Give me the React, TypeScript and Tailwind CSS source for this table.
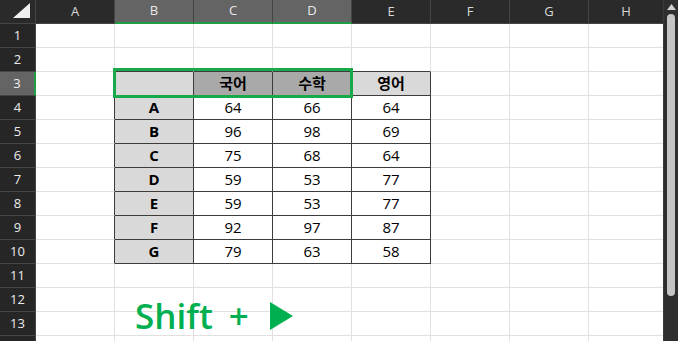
import React from 'react';

const cols = ['A', 'B', 'C', 'D', 'E', 'F', 'G', 'H'];
const colWidths = ['w-[79px]', 'w-[79px]', 'w-[79px]', 'w-[79px]', 'w-[79px]', 'w-[79px]', 'w-[79px]', 'w-[75px]'];

const data: Record<number, string[]> = {
    3: ['', '국어', '수학', '영어'],
    4: ['A', '64', '66', '64'],
    5: ['B', '96', '98', '69'],
    6: ['C', '75', '68', '64'],
    7: ['D', '59', '53', '77'],
    8: ['E', '59', '53', '77'],
    9: ['F', '92', '97', '87'],
    10: ['G', '79', '63', '58'],
};

const inTable = (r: number, c: number) => r >= 3 && r <= 10 && c >= 1 && c <= 4;

const Cell = ({ r, c }: { r: number; c: number }) => {
    const t = inTable(r, c);
    const darkRight = t || (c === 0 && r >= 3 && r <= 10);
    const darkBottom = t || (r === 2 && c >= 1 && c <= 4);
    let bg = 'bg-white';
    if (t && (c === 1 || (r === 3 && c === 4))) bg = 'bg-[#d9d9d9]';
    if (r === 3 && (c === 2 || c === 3)) bg = 'bg-[#a9a9a9]';
    const bold = t && (c === 1 || r === 3);
    const text = t ? data[r][c - 1] : '';
    return (
        <div
            className={`${colWidths[c]} h-full shrink-0 flex items-center justify-center border-r border-b text-[15px] text-black ${bg} ${
                darkRight ? 'border-r-[#3c3c3c]' : 'border-r-[#e1e1e1]'
            } ${darkBottom ? 'border-b-[#3c3c3c]' : 'border-b-[#e1e1e1]'} ${bold ? 'font-bold' : ''}`}
        >
            {text}
        </div>
    );
};

export default function App() {
    const rows = Array.from({ length: 14 }, (_, i) => i + 1);
    return (
        <div className="relative w-[678px] h-[341px] overflow-hidden flex bg-white font-['Open_Sans','Noto_Sans_CJK_KR',sans-serif]">
            <div className="w-[663px] flex flex-col shrink-0">
                {/* column headers */}
                <div className="flex h-[24px] shrink-0 bg-[#2a2a2a]">
                    <div className="w-[36px] h-full shrink-0 border-r border-b border-[#454545] flex items-end justify-end pr-[5px] pb-[5px]">
                        <svg width="17" height="15" viewBox="0 0 17 15">
                            <polygon points="17,0 17,15 0,15" fill="#f0f0f0" />
                        </svg>
                    </div>
                    {cols.map((c, i) => {
                        const sel = i >= 1 && i <= 3;
                        return (
                            <div
                                key={c}
                                className={`${colWidths[i]} h-full shrink-0 flex items-center justify-center text-[13px] border-r border-[#454545] ${
                                    sel ? 'bg-[#646464] text-[#e8e8e8] border-b-2 border-b-[#1f9d47]' : 'text-[#d8d8d8] border-b border-b-[#454545]'
                                }`}
                            >
                                {c}
                            </div>
                        );
                    })}
                </div>
                {rows.map((r) => (
                    <div key={r} className="flex h-[24px] shrink-0">
                        <div
                            className={`w-[36px] h-full shrink-0 flex items-center justify-center text-[13px] border-b border-[#454545] ${
                                r === 3 ? 'bg-[#646464] text-[#f0f0f0] border-r-2 border-r-[#1f9d47]' : 'bg-[#262626] text-[#ececec] border-r border-r-[#454545]'
                            }`}
                        >
                            {r}
                        </div>
                        {cols.map((_, c) => (
                            <Cell key={c} r={r} c={c} />
                        ))}
                    </div>
                ))}
            </div>
            {/* scrollbar */}
            <div className="w-[15px] h-full bg-[#2e2e2e] flex flex-col items-center pt-[4px] gap-[4px] border-l border-[#3a3a3a]">
                <svg width="9" height="6" viewBox="0 0 9 6">
                    <polygon points="4.5,0 9,6 0,6" fill="#d0d0d0" />
                </svg>
                <div className="w-[8px] h-[282px] rounded-full bg-[#c4c4c4]" />
            </div>

            {/* selection outline */}
            <div className="absolute left-[113px] top-[68px] w-[240px] h-[30px] border-[3px] border-[#19a94b]" />

            {/* label */}
            <div className="absolute left-[135px] top-[296px] flex items-center text-[#00b050] font-semibold text-[35px] leading-[40px]">
                <span>Shift</span>
                <span className="ml-[16px]">+</span>
                <svg className="ml-[21px]" width="23" height="28" viewBox="0 0 23 28">
                    <polygon points="0,0 23,14 0,28" fill="#00b050" />
                </svg>
            </div>
        </div>
    );
}
